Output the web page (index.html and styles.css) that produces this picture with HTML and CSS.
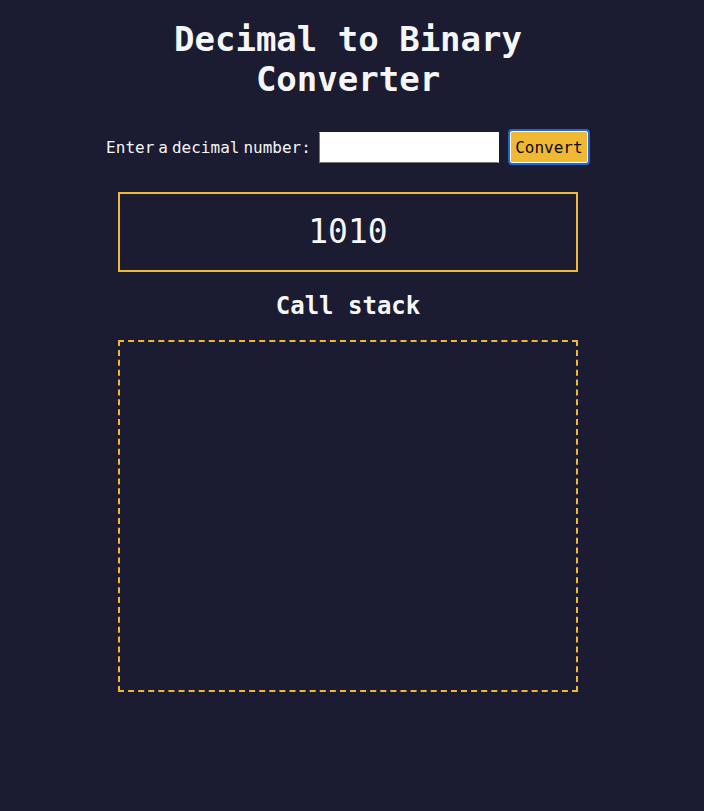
FILE: index.html
```html
<!DOCTYPE html>
<html lang="en">
<head>
<meta charset="utf-8">
<title>Decimal to Binary Converter</title>
<link rel="stylesheet" href="styles.css">
</head>
<body>
<main class="page">
  <h1 class="title">Decimal to Binary<br>Converter</h1>
  <div class="input-container">
    <label class="label" for="number-input">Enter a decimal number:</label>
    <input class="number-input" id="number-input" type="number">
    <button class="convert-btn" type="button">Convert</button>
  </div>
  <div class="output-container">
    <div class="result">1010</div>
    <h2 class="stack-title">Call stack</h2>
    <div class="animation-container"></div>
  </div>
</main>
</body>
</html>
```
FILE: styles.css
```css
*, *::before, *::after {
  box-sizing: border-box;
  margin: 0;
  padding: 0;
}

html, body {
  background-color: #1b1b32;
}

body {
  font-family: "DejaVu Sans Mono", "Liberation Mono", monospace;
  color: #f5f6f7;
  font-size: 16px;
  height: 811px;
  overflow: hidden;
}

.page {
  width: 696px;
  display: flex;
  flex-direction: column;
  align-items: center;
}

.title {
  font-size: 34px;
  line-height: 40px;
  font-weight: bold;
  text-align: center;
  margin: 19px 0 30px;
}

.input-container {
  display: flex;
  align-items: center;
  justify-content: center;
  height: 36px;
}

.label {
  font-size: 16px;
  word-spacing: -5.6px;
  margin-right: 8px;
}

.number-input {
  width: 180px;
  height: 31px;
  background: #fff;
  border: 1px solid #767676;
  border-top-color: #fff;
  border-right-color: #fff;
  margin-right: 9px;
  font-family: inherit;
  font-size: 16px;
}

.convert-btn {
  width: 82px;
  height: 36px;
  background-color: #f1b933;
  color: #0a0a23;
  font-family: "DejaVu Sans Mono", "Liberation Mono", monospace;
  font-size: 16px;
  border: 2px solid #1f66d6;
  border-radius: 4px;
  box-shadow: inset 0 0 0 1px #ffffff;
  cursor: pointer;
}

.output-container {
  display: flex;
  flex-direction: column;
  align-items: center;
  margin-top: 27px;
}

.result {
  width: 460px;
  height: 80px;
  border: 2px solid #f1b933;
  font-size: 33px;
  display: flex;
  align-items: center;
  justify-content: center;
  padding-bottom: 2px;
}

.stack-title {
  font-size: 24px;
  line-height: 28px;
  font-weight: bold;
  margin: 20px 0;
}

.animation-container {
  width: 460px;
  height: 352px;
  border: 2px dashed #f1b933;
}
```
